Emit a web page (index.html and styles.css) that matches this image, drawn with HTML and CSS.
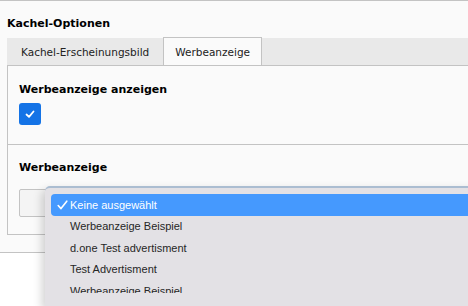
FILE: index.html
```html
<!DOCTYPE html>
<html lang="de">
<head>
    <meta charset="UTF-8">
    <meta name="viewport" content="width=device-width, initial-scale=1.0">
    <title>Kachel-Optionen</title>
    <link rel="stylesheet" href="styles.css">
</head>
<body>
    <div class="options">
        <h2>Kachel-Optionen</h2>
        <div class="tabs">
            <div class="tab">Kachel-Erscheinungsbild</div>
            <div class="tab active">Werbeanzeige</div>
        </div>
        <div class="tab-panel">
            <div class="field">
                <label class="field-label">Werbeanzeige anzeigen</label>
                <span class="checkbox">
                    <svg width="12" height="12" viewBox="0 0 12 12">
                        <polyline points="2.5,6.5 5,8.8 9.5,3.5" fill="none" stroke="#fff" stroke-width="1.8" stroke-linecap="round" stroke-linejoin="round"/>
                    </svg>
                </span>
            </div>
            <div class="field">
                <label class="field-label">Werbeanzeige</label>
                <div class="select-box"></div>
            </div>
        </div>
    </div>

    <!-- native popup of the select, opened -->
    <div class="popup-menu">
        <ul class="menu-items">
            <li class="menu-item selected">
                <svg class="tick" width="11" height="10" viewBox="0 0 11 10">
                    <polyline points="1.2,5.5 4,8.6 9.8,1.2" fill="none" stroke="#fff" stroke-width="1.6" stroke-linecap="round" stroke-linejoin="round"/>
                </svg>
                Keine ausgewählt
            </li>
            <li class="menu-item">Werbeanzeige Beispiel</li>
            <li class="menu-item">d.one Test advertisment</li>
            <li class="menu-item">Test Advertisment</li>
            <li class="menu-item">Werbeanzeige Beispiel</li>
        </ul>
    </div>
</body>
</html>
```

FILE: styles.css
```css
body {
    margin: 0;
    background-color: #ffffff;
    font-family: 'DejaVu Sans', Verdana, sans-serif;
    font-size: 11px;
    color: #000000;
    overflow: hidden;
}

.options {
    background-color: #fafafa;
    border-top: 1px solid #c3c3c3;
    border-bottom: 1px solid #c3c3c3;
    padding: 16px 0 17px 7px;
}

h2 {
    margin: 0 0 7px 0;
    font-size: 11px;
    line-height: 14px;
    font-weight: bold;
}

.tabs {
    display: flex;
    background-color: #e9e9e9;
    border-bottom: 1px solid #c3c3c3;
    height: 27px;
    font-size: 10.5px;
}

.tab {
    padding: 0 13px;
    line-height: 27px;
    color: #222;
    border: 1px solid transparent;
    border-bottom: none;
}

.tab.active {
    background-color: #fafafa;
    border-color: #c3c3c3;
    height: 27px;
    margin-bottom: -1px;
    margin-top: -1px;
    line-height: 28px;
    padding: 0 11px;
}

.tab-panel {
    border-left: 1px solid #c3c3c3;
    border-bottom: 1px solid #c3c3c3;
}

.field {
    padding: 17px 11px 19px 11px;
}

.field + .field {
    border-top: 1px solid #c3c3c3;
    padding-top: 16px;
    padding-bottom: 17px;
}

.field-label {
    display: block;
    font-weight: bold;
    line-height: 14px;
}

.checkbox {
    display: flex;
    align-items: center;
    justify-content: center;
    width: 22px;
    height: 22px;
    margin-top: 6px;
    border-radius: 3px;
    background-color: #1473e6;
}

.select-box {
    margin-top: 14px;
    height: 26px;
    width: 200px;
    border: 1px solid #c3c3c3;
    border-radius: 2px;
    background-color: #f4f4f4;
}

/* macOS style popup list */
.popup-menu {
    position: absolute;
    left: 45px;
    top: 186px;
    width: 440px;
    height: 118px;
    background-color: #e3e1e5;
    border-top: 2px solid #abbdd1;
    border-radius: 5px 0 0 0;
    box-shadow: -3px 4px 10px rgba(0, 0, 0, 0.18);
    font-family: 'Liberation Sans', Arial, sans-serif;
    font-size: 11px;
    color: #262626;
}

.menu-items {
    list-style: none;
    margin: 6px 0 0 6px;
    padding: 0;
    height: 99px;
    overflow: hidden;
}

.menu-item {
    position: relative;
    height: 21.5px;
    line-height: 21.5px;
    padding-left: 19px;
}

.menu-item.selected {
    height: 22px;
    line-height: 22px;
    background-color: #4599fe;
    color: #ffffff;
    border-radius: 4px 0 0 4px;
}

.tick {
    position: absolute;
    left: 6px;
    top: 6px;
}
```
